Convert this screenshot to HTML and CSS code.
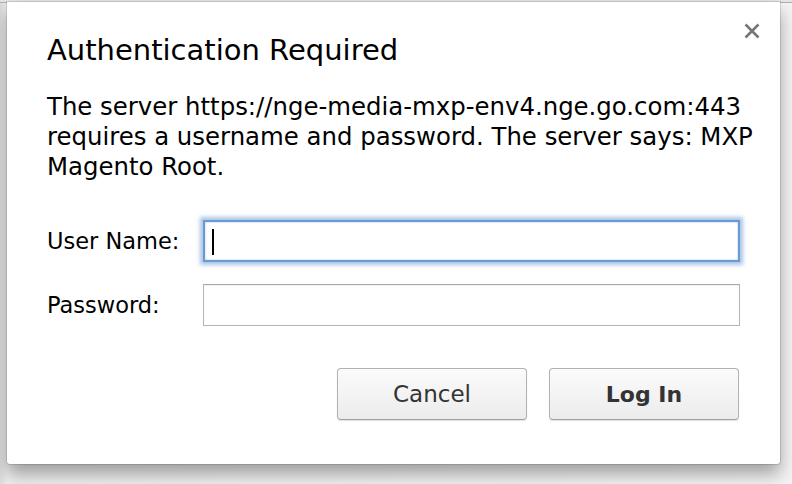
FILE: index.html
```html
<!DOCTYPE html>
<html>
<head>
<meta charset="utf-8">
<link rel="stylesheet" href="styles.css">
</head>
<body>
<div class="page">
  <div class="topbar"></div>
  <div class="dialog">
    <button class="close" aria-label="Close">
      <svg width="16" height="16" viewBox="0 0 16 16"><path d="M1.5 1.5 L14.5 14.5 M14.5 1.5 L1.5 14.5" stroke="#777" stroke-width="2.6" stroke-linecap="butt"/></svg>
    </button>
    <h1 class="title">Authentication Required</h1>
    <p class="message">The server https://nge-media-mxp-env4.nge.go.com:443 requires a username and password. The server says: MXP Magento Root.</p>
    <div class="form">
      <label class="label" for="user">User Name:</label>
      <div class="field focused"><span class="caret"></span></div>
      <label class="label" for="pass">Password:</label>
      <div class="field"></div>
    </div>
    <div class="actions">
      <button class="btn">Cancel</button>
      <button class="btn primary">Log In</button>
    </div>
  </div>
</div>
</body>
</html>
```
FILE: styles.css
```css
* { box-sizing: border-box; }
html, body { margin: 0; padding: 0; }
body {
  width: 792px;
  height: 484px;
  overflow: hidden;
  background: linear-gradient(90deg, #dcdcdc 0px, #efefef 8px, #f4f4f4 100%);
  font-family: "DejaVu Sans", "Lucida Grande", sans-serif;
  color: #000;
}
.page {
  position: relative;
  height: 484px;
  padding: 2px 12px 0 7px;
}
.topbar {
  position: absolute;
  left: 0; right: 0; top: 0;
  height: 3px;
  background: #e6e6e6;
  border-bottom: 1px solid #b0b0b0;
}
.dialog {
  position: relative;
  width: 773px;
  height: 462px;
  background: #fff;
  border-radius: 0 0 3px 3px;
  box-shadow: 0 0 0 1px rgba(0,0,0,0.12), 0 10px 18px rgba(0,0,0,0.35);
  padding: 31px 40px 0 40px;
}
.close {
  position: absolute;
  top: 21px;
  right: 20px;
  width: 16px;
  height: 16px;
  padding: 0;
  border: 0;
  background: none;
  display: flex;
}
.title {
  margin: 0;
  font-weight: normal;
  font-size: 29px;
  line-height: 34px;
}
.message {
  margin: 25px 0 0 0;
  font-size: 24.4px;
  line-height: 30px;
  width: 714px;
}
.form {
  margin-top: 38px;
  display: grid;
  grid-template-columns: 156px 537px;
  row-gap: 22px;
  align-items: center;
}
.label {
  font-size: 22.5px;
  line-height: 26px;
}
.field {
  height: 42px;
  border: 1px solid #b4b4b4;
  border-top-color: #a8a8a8;
  background: #fff;
  box-shadow: inset 0 1px 1px rgba(0,0,0,0.06);
  position: relative;
}
.field.focused {
  border: 2px solid #6a9bd0;
  box-shadow: 0 0 4px 3px rgba(100,150,210,0.55), inset 0 0 2px rgba(90,140,200,0.6);
}
.caret {
  position: absolute;
  left: 7px;
  top: 7px;
  width: 2px;
  height: 26px;
  background: #000;
}
.actions {
  margin-top: 42px;
  display: flex;
  justify-content: flex-end;
  gap: 22px;
  padding-right: 1px;
}
.btn {
  width: 190px;
  height: 52px;
  border: 1px solid #b2b2b2;
  border-bottom-color: #a0a0a0;
  border-radius: 4px;
  background: linear-gradient(#fbfbfb, #ececec);
  box-shadow: 0 1px 1px rgba(0,0,0,0.12);
  font-family: "DejaVu Sans", "Lucida Grande", sans-serif;
  font-size: 23px;
  color: #333;
  padding: 0;
}
.btn.primary {
  font-weight: bold;
  font-size: 22px;
}
```
